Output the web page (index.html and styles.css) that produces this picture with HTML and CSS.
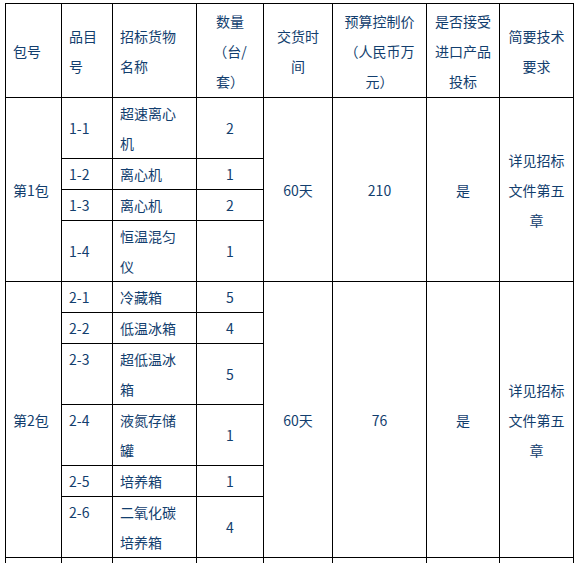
FILE: index.html
```html
<!DOCTYPE html>
<html lang="zh-CN">
<head>
<meta charset="utf-8">
<title>招标货物一览表</title>
<link rel="stylesheet" href="styles.css">
</head>
<body>
<table class="bid">
  <colgroup>
    <col class="c1"><col class="c2"><col class="c3"><col class="c4"><col class="c5"><col class="c6"><col class="c7"><col class="c8">
  </colgroup>
  <thead>
    <tr class="head">
      <th class="left">包号</th>
      <th class="left">品目<br>号</th>
      <th class="left">招标货物<br>名称</th>
      <th>数量<br>（台/<br>套）</th>
      <th>交货时<br>间</th>
      <th>预算控制价<br>（人民币万<br>元）</th>
      <th>是否接受<br>进口产品<br>投标</th>
      <th>简要技术<br>要求</th>
    </tr>
  </thead>
  <tbody>
    <tr>
      <td class="left" rowspan="4">第1包</td>
      <td class="left">1-1</td>
      <td class="left">超速离心<br>机</td>
      <td>2</td>
      <td rowspan="4">60天</td>
      <td rowspan="4">210</td>
      <td rowspan="4">是</td>
      <td rowspan="4">详见招标<br>文件第五<br>章</td>
    </tr>
    <tr>
      <td class="left">1-2</td>
      <td class="left">离心机</td>
      <td>1</td>
    </tr>
    <tr>
      <td class="left">1-3</td>
      <td class="left">离心机</td>
      <td>2</td>
    </tr>
    <tr>
      <td class="left">1-4</td>
      <td class="left">恒温混匀<br>仪</td>
      <td>1</td>
    </tr>
    <tr>
      <td class="left" rowspan="6">第2包</td>
      <td class="left">2-1</td>
      <td class="left">冷藏箱</td>
      <td>5</td>
      <td rowspan="6">60天</td>
      <td rowspan="6">76</td>
      <td rowspan="6">是</td>
      <td rowspan="6">详见招标<br>文件第五<br>章</td>
    </tr>
    <tr>
      <td class="left">2-2</td>
      <td class="left">低温冰箱</td>
      <td>4</td>
    </tr>
    <tr>
      <td class="left top">2-3</td>
      <td class="left">超低温冰<br>箱</td>
      <td>5</td>
    </tr>
    <tr>
      <td class="left top">2-4</td>
      <td class="left">液氮存储<br>罐</td>
      <td>1</td>
    </tr>
    <tr>
      <td class="left">2-5</td>
      <td class="left">培养箱</td>
      <td>1</td>
    </tr>
    <tr>
      <td class="left top">2-6</td>
      <td class="left">二氧化碳<br>培养箱</td>
      <td>4</td>
    </tr>
    <tr class="next">
      <td></td><td></td><td></td><td></td><td></td><td></td><td></td><td></td>
    </tr>
  </tbody>
</table>
</body>
</html>
```
FILE: styles.css
```css
html, body {
  margin: 0;
  padding: 0;
  background: #ffffff;
}

body {
  padding: 3px 0 0 5px;
  font-family: "Noto Sans CJK SC", "Noto Sans", sans-serif;
  font-size: 14px;
  color: #123e6e;
}

.bid {
  border-collapse: collapse;
  table-layout: fixed;
  width: 568px;
}

.c1 { width: 56px; }
.c2 { width: 51px; }
.c3 { width: 84px; }
.c4 { width: 67px; }
.c5 { width: 69px; }
.c6 { width: 94px; }
.c7 { width: 73px; }
.c8 { width: 74px; }

.bid th,
.bid td {
  border: 1px solid #000000;
  padding: 0 7px;
  line-height: 30px;
  text-align: center;
  vertical-align: middle;
  font-weight: normal;
  white-space: nowrap;
  overflow: hidden;
}

.bid .left {
  text-align: left;
}

.bid .top {
  vertical-align: top;
}

.head {
  height: 94px;
}

.next td {
  height: 40px;
}
```
